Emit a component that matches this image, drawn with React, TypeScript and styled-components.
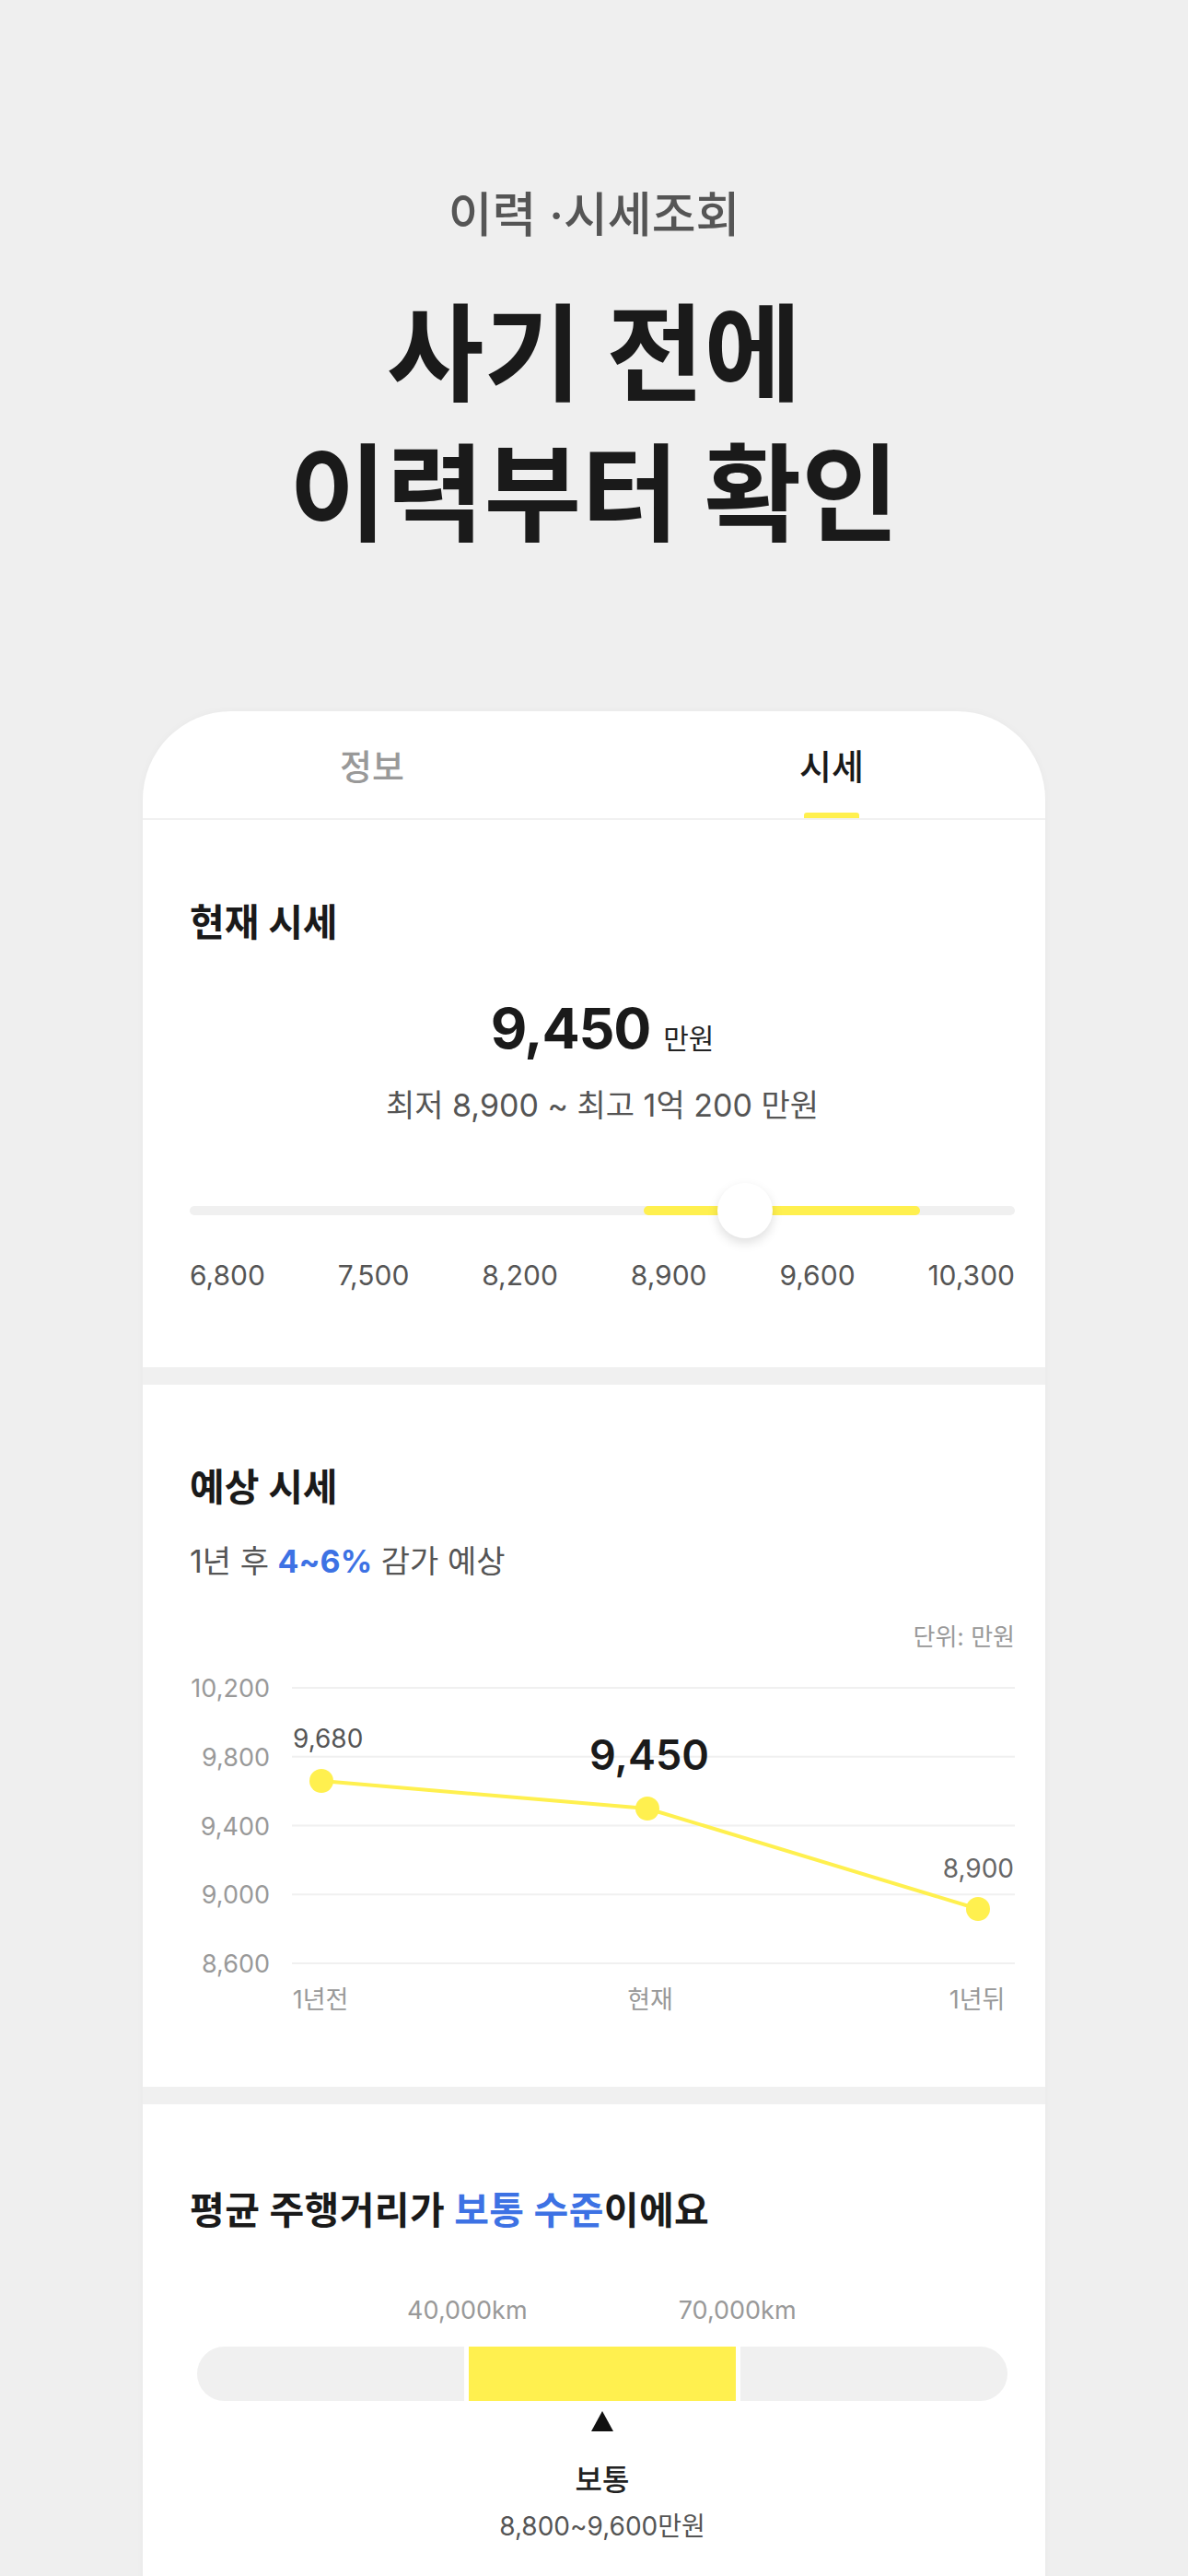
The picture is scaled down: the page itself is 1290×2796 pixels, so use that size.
import React from "react";
import styled, { createGlobalStyle } from "styled-components";

const GlobalStyle = createGlobalStyle`
  html, body { margin: 0; padding: 0; background: #efefef; }
  body {
    font-family: Inter, "Noto Sans CJK KR", sans-serif;
    -webkit-font-smoothing: antialiased;
  }
  * { box-sizing: border-box; }
`;

const YELLOW = "#fff04f";
const BLUE = "#3d72e4";

const Page = styled.div`
  width: 1290px;
  height: 2796px;
  overflow: hidden;
  padding-top: 204px;
  display: flex;
  flex-direction: column;
  align-items: center;
`;

const Eyebrow = styled.p`
  margin: 0;
  font-size: 52px;
  line-height: 60px;
  font-weight: 500;
  color: #555555;
`;

const Headline = styled.h1`
  margin: 45px 0 0;
  font-size: 115px;
  line-height: 152px;
  font-weight: 700;
  color: #1a1a1a;
  text-align: center;
`;

const Card = styled.div`
  margin-top: 159px;
  width: 980px;
  flex: 1;
  background: #ffffff;
  border-radius: 96px 96px 0 0;
  box-shadow: 0 0 10px rgba(0, 0, 0, 0.03);
  display: flex;
  flex-direction: column;
`;

const TabBar = styled.div`
  height: 118px;
  display: flex;
  justify-content: space-between;
  padding: 0 197px 0 214px;
  border-bottom: 2px solid #f1f1f1;
`;

const Tab = styled.div<{ $active?: boolean }>`
  display: flex;
  flex-direction: column;
  align-items: center;
  padding-top: 38px;
  font-size: 38px;
  line-height: 44px;
  font-weight: 500;
  color: ${(p) => (p.$active ? "#1a1a1a" : "#999999")};
`;

const TabIndicator = styled.div<{ $active?: boolean }>`
  margin-top: auto;
  width: 60px;
  height: 6px;
  border-radius: 3px 3px 0 0;
  background: ${(p) => (p.$active ? YELLOW : "transparent")};
`;

const Section = styled.section<{ $pt: number; $pb: number }>`
  padding: ${(p) => p.$pt}px 33px ${(p) => p.$pb}px 51px;
  display: flex;
  flex-direction: column;
`;

const Band = styled.div`
  height: 19px;
  background: #f0f0f0;
`;

const SectionTitle = styled.h2<{ $wide?: boolean }>`
  margin: 0;
  font-size: 41px;
  line-height: 48px;
  font-weight: 700;
  color: #1a1a1a;
  letter-spacing: ${(p) => (p.$wide ? "0.01em" : "0")};
`;

const Accent = styled.span<{ $bold?: boolean }>`
  color: ${BLUE};
  font-weight: ${(p) => (p.$bold ? 700 : "inherit")};
`;

const PriceRow = styled.div`
  margin-top: 60px;
  height: 62px;
  display: flex;
  justify-content: center;
  align-items: baseline;
  gap: 14px;
`;

const PriceValue = styled.span`
  font-size: 61px;
  line-height: 62px;
  font-weight: 700;
  color: #1a1a1a;
  letter-spacing: -0.02em;
`;

const PriceUnit = styled.span`
  font-size: 30px;
  line-height: 30px;
  color: #222222;
`;

const RangeText = styled.p`
  margin: 33px 0 0;
  text-align: center;
  font-size: 34px;
  line-height: 40px;
  color: #555555;
`;

const Slider = styled.div`
  margin-top: 64px;
  height: 60px;
  position: relative;
  display: flex;
  align-items: center;
`;

const Track = styled.div`
  width: 100%;
  height: 10px;
  border-radius: 5px;
  background: #f0f0f0;
  position: relative;
`;

const Fill = styled.div`
  position: absolute;
  top: 0;
  bottom: 0;
  border-radius: 5px;
  background: ${YELLOW};
`;

const Thumb = styled.div`
  position: absolute;
  top: 0;
  width: 60px;
  height: 60px;
  margin-left: -30px;
  border-radius: 50%;
  background: #ffffff;
  box-shadow: 0 5px 12px rgba(0, 0, 0, 0.13);
`;

const TickRow = styled.div`
  margin-top: 22px;
  display: flex;
  justify-content: space-between;
  font-size: 30px;
  line-height: 36px;
  color: #555555;
`;

const SubText = styled.p`
  margin: 37px 0 0;
  font-size: 34px;
  line-height: 40px;
  color: #555555;
`;

const UnitNote = styled.p`
  margin: 47px 0 0;
  text-align: right;
  font-size: 26px;
  line-height: 30px;
  color: #999999;
`;

const ChartSvg = styled.svg`
  display: block;
  margin-top: 8px;
  font-family: Inter, "Noto Sans CJK KR", sans-serif;
`;

const KmRow = styled.div`
  margin: 69px 8px 0;
  display: grid;
  grid-template-columns: repeat(3, 1fr);
  font-size: 27px;
  line-height: 32px;
  color: #999999;
`;

const KmLabel = styled.span`
  justify-self: end;
  transform: translateX(50%);
`;

const LevelBar = styled.div`
  margin: 23px 8px 0;
  height: 59px;
  display: grid;
  grid-template-columns: repeat(3, 1fr);
  gap: 5px;
`;

const LevelSeg = styled.div<{ $on?: boolean; $pos: "l" | "m" | "r" }>`
  background: ${(p) => (p.$on ? YELLOW : "#f0f0f0")};
  border-radius: ${(p) =>
    p.$pos === "l" ? "30px 0 0 30px" : p.$pos === "r" ? "0 30px 30px 0" : "0"};
`;

const Marker = styled.div`
  margin-top: 11px;
  align-self: center;
  width: 0;
  height: 0;
  border-left: 12.5px solid transparent;
  border-right: 12.5px solid transparent;
  border-bottom: 22px solid #111111;
`;

const LevelName = styled.p`
  margin: 33px 0 0;
  text-align: center;
  font-size: 32px;
  line-height: 40px;
  font-weight: 500;
  color: #222222;
`;

const LevelPrice = styled.p`
  margin: 12px 0 0;
  text-align: center;
  font-size: 28px;
  line-height: 36px;
  color: #555555;
`;

const ticks = ["6,800", "7,500", "8,200", "8,900", "9,600", "10,300"];

const gridYs = [32, 106.75, 181.5, 256.25, 331];
const gridLabels = ["10,200", "9,800", "9,400", "9,000", "8,600"];
const points = [
  { x: 143, y: 133 },
  { x: 497, y: 163 },
  { x: 856, y: 272 },
];

function ForecastChart() {
  return (
    <ChartSvg width={896} height={400} viewBox="0 0 896 400">
      {gridYs.map((y, i) => (
        <g key={i}>
          <line x1={111} x2={896} y1={y} y2={y} stroke="#f0f0f0" strokeWidth={2} />
          <text x={87} y={y + 10} textAnchor="end" fontSize={27} fill="#999999">
            {gridLabels[i]}
          </text>
        </g>
      ))}
      <polyline
        points={points.map((p) => `${p.x},${p.y}`).join(" ")}
        fill="none"
        stroke={YELLOW}
        strokeWidth={4}
        strokeLinejoin="round"
      />
      {points.map((p, i) => (
        <circle key={i} cx={p.x} cy={p.y} r={13} fill={YELLOW} />
      ))}
      <text x={112} y={97} fontSize={28} fill="#555555">9,680</text>
      <text x={499} y={121} textAnchor="middle" fontSize={45} fontWeight={600} fill="#1a1a1a">
        9,450
      </text>
      <text x={895} y={238} textAnchor="end" fontSize={28} fill="#666666">8,900</text>
      <text x={142} y={380} textAnchor="middle" fontSize={27} fill="#999999">1년전</text>
      <text x={500} y={380} textAnchor="middle" fontSize={27} fill="#999999">현재</text>
      <text x={855} y={380} textAnchor="middle" fontSize={27} fill="#999999">1년뒤</text>
    </ChartSvg>
  );
}

export default function App() {
  return (
    <>
      <GlobalStyle />
      <Page>
        <Eyebrow>이력 ·시세조회</Eyebrow>
        <Headline>
          사기 전에
          <br />
          이력부터 확인
        </Headline>
        <Card>
          <TabBar>
            <Tab>
              정보
              <TabIndicator />
            </Tab>
            <Tab $active>
              시세
              <TabIndicator $active />
            </Tab>
          </TabBar>

          <Section $pt={87} $pb={82}>
            <SectionTitle>현재 시세</SectionTitle>
            <PriceRow>
              <PriceValue>9,450</PriceValue>
              <PriceUnit>만원</PriceUnit>
            </PriceRow>
            <RangeText>최저 8,900 ~ 최고 1억 200 만원</RangeText>
            <Slider>
              <Track>
                <Fill style={{ left: "55%", width: "33.5%" }} />
              </Track>
              <Thumb style={{ left: "67.3%" }} />
            </Slider>
            <TickRow>
              {ticks.map((t) => (
                <span key={t}>{t}</span>
              ))}
            </TickRow>
          </Section>

          <Band />

          <Section $pt={87} $pb={65}>
            <SectionTitle>예상 시세</SectionTitle>
            <SubText>
              1년 후 <Accent $bold>4~6%</Accent> 감가 예상
            </SubText>
            <UnitNote>단위: 만원</UnitNote>
            <ForecastChart />
          </Section>

          <Band />

          <Section $pt={91} $pb={60}>
            <SectionTitle $wide>
              평균 주행거리가 <Accent>보통 수준</Accent>이에요
            </SectionTitle>
            <KmRow>
              <KmLabel>40,000km</KmLabel>
              <KmLabel>70,000km</KmLabel>
            </KmRow>
            <LevelBar>
              <LevelSeg $pos="l" />
              <LevelSeg $pos="m" $on />
              <LevelSeg $pos="r" />
            </LevelBar>
            <Marker />
            <LevelName>보통</LevelName>
            <LevelPrice>8,800~9,600만원</LevelPrice>
          </Section>
        </Card>
      </Page>
    </>
  );
}
